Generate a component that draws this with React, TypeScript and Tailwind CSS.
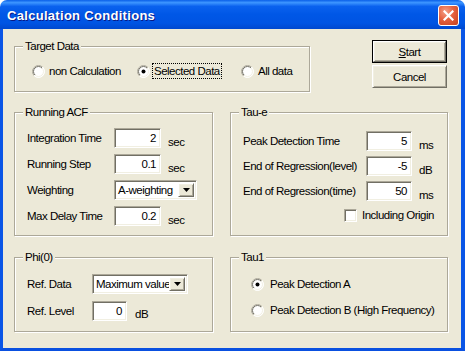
import React from "react";

const SUNKEN =
  "bg-white border border-t-[#aca899] border-l-[#aca899] border-r-white border-b-white shadow-[inset_1px_1px_0_#716f64,inset_-1px_-1px_0_#f1efe2]";
const RAISED =
  "bg-[#ece9d8] border border-t-white border-l-white border-r-[#716f64] border-b-[#716f64] shadow-[inset_1px_1px_0_#f1efe2,inset_-1px_-1px_0_#aca899]";

function Group({
  label,
  className,
  children,
}: {
  label: string;
  className: string;
  children?: React.ReactNode;
}) {
  return (
    <div
      className={`relative border border-[#aca899] shadow-[inset_1px_1px_0_#fff,1px_1px_0_#fff] ${className}`}
    >
      <span className="absolute left-[8px] top-[-8px] bg-[#ece9d8] px-[2px] leading-[14px]">
        {label}
      </span>
      {children}
    </div>
  );
}

function RadioDot({ checked }: { checked?: boolean }) {
  return (
    <svg width="13" height="13" viewBox="0 0 13 13" className="shrink-0">
      <defs>
        <linearGradient id="rgo" x1="0" y1="0" x2="1" y2="1">
          <stop offset="0" stopColor="#aca899" />
          <stop offset="0.5" stopColor="#aca899" />
          <stop offset="0.5" stopColor="#ffffff" />
          <stop offset="1" stopColor="#ffffff" />
        </linearGradient>
        <linearGradient id="rgi" x1="0" y1="0" x2="1" y2="1">
          <stop offset="0" stopColor="#716f64" />
          <stop offset="0.5" stopColor="#716f64" />
          <stop offset="0.5" stopColor="#f1efe2" />
          <stop offset="1" stopColor="#f1efe2" />
        </linearGradient>
      </defs>
      <circle cx="6.5" cy="6.5" r="6" fill="#fff" stroke="url(#rgo)" strokeWidth="1" />
      <circle cx="6.5" cy="6.5" r="5" fill="#fff" stroke="url(#rgi)" strokeWidth="1" />
      {checked && <circle cx="6.5" cy="6.5" r="2" fill="#000" />}
    </svg>
  );
}

function Radio({
  label,
  checked,
  focus,
  className = "",
  gap = "ml-[2px]",
}: {
  label: string;
  checked?: boolean;
  focus?: boolean;
  className?: string;
  gap?: string;
}) {
  return (
    <div className={`flex items-center h-[16px] ${className}`}>
      <RadioDot checked={checked} />
      <span
        className={`${gap} px-[1px] leading-[14px] border border-dotted ${
          focus ? "border-black" : "border-transparent"
        } whitespace-nowrap`}
      >
        {label}
      </span>
    </div>
  );
}

function Field({ value, className }: { value: string; className: string }) {
  return (
    <div
      className={`${SUNKEN} h-[20px] flex items-center justify-end pr-[4px] leading-[18px] ${className}`}
    >
      {value}
    </div>
  );
}

function Select({ value, className }: { value: string; className: string }) {
  return (
    <div className={`${SUNKEN} h-[20px] flex p-[2px] ${className}`}>
      <span className="flex-1 leading-[15px] pl-[1px] whitespace-nowrap overflow-hidden">
        {value}
      </span>
      <div className={`${RAISED} w-[16px] h-full flex items-center justify-center`}>
        <svg width="7" height="4" viewBox="0 0 7 4">
          <path d="M0 0h7L3.5 4z" fill="#000" />
        </svg>
      </div>
    </div>
  );
}

function Unit({ children }: { children: React.ReactNode }) {
  return <span className="ml-[7px] pt-[7px] leading-[14px]">{children}</span>;
}

export default function App() {
  return (
    <div className="w-[465px] h-[351px] bg-white font-['Liberation_Sans',Arial,sans-serif] text-[11.5px] tracking-[-0.5px] text-black">
      <div className="w-[465px] h-[351px] flex flex-col">
        {/* Title bar */}
        <div className="h-[29px] shrink-0 flex items-start rounded-t-[7px] pl-[7px] pr-[6px] bg-[linear-gradient(180deg,#0a5fe8_0%,#3d95ff_9%,#0a61ee_22%,#0057e6_50%,#0054e3_80%,#0048cf_100%)]">
          <span className="mt-[8px] leading-[16px] text-white font-bold text-[13px] tracking-[0.3px] [text-shadow:1px_1px_0_#0a1883]">
            Calculation Conditions
          </span>
          <div className="ml-auto mt-[5px] w-[21px] h-[21px] rounded-[3px] border border-white flex items-center justify-center bg-[radial-gradient(circle_at_35%_30%,#f4a088_0%,#e5613f_45%,#c8401c_100%)]">
            <svg width="11" height="11" viewBox="0 0 11 11">
              <path d="M1.5 1.5L9.5 9.5M9.5 1.5L1.5 9.5" stroke="#fff" strokeWidth="2.2" strokeLinecap="square" />
            </svg>
          </div>
        </div>

        {/* Client area */}
        <div className="flex-1 bg-[#ece9d8] border-l-[3px] border-r-[4px] border-b-[3px] border-l-[#0a55e6] border-r-[#0a55e6] border-b-[#0a50e0] pl-[11px] pt-[11px]">
          {/* Row 1 */}
          <div className="flex">
            <Group label="Target Data" className="mt-[6px] w-[296px] h-[46px]">
              <div className="flex pt-[16px] pl-[17px]">
                <Radio label="non Calculation" className="w-[105px]" />
                <Radio label="Selected Data" checked focus className="w-[104px]" />
                <Radio label="All data" />
              </div>
            </Group>
            <div className="ml-[62px] flex flex-col gap-[2px]">
              <button className="w-[75px] h-[23px] border border-black p-0 bg-[#ece9d8]">
                <div className={`${RAISED} h-full flex items-center justify-center leading-[14px]`}>
                  <span>
                    <span className="underline underline-offset-[1px]">S</span>tart
                  </span>
                </div>
              </button>
              <button className={`${RAISED} w-[75px] h-[23px] flex items-center justify-center leading-[14px]`}>
                Cancel
              </button>
            </div>
          </div>

          {/* Rows 2 and 3 */}
          <div className="mt-[20px] grid grid-cols-[199px_218px] grid-rows-[124px_75px] gap-x-[17px] gap-y-[21px]">
            <Group label="Running ACF" className="">
              <div className="flex flex-col gap-[6px] pt-[15px] pl-[12px]">
                <div className="flex items-center h-[20px]">
                  <span className="w-[87px] leading-[14px] whitespace-nowrap">Integration Time</span>
                  <Field value="2" className="w-[47px]" />
                  <Unit>sec</Unit>
                </div>
                <div className="flex items-center h-[20px]">
                  <span className="w-[87px] leading-[14px] whitespace-nowrap">Running Step</span>
                  <Field value="0.1" className="w-[47px]" />
                  <Unit>sec</Unit>
                </div>
                <div className="flex items-center h-[20px]">
                  <span className="w-[87px] leading-[14px] whitespace-nowrap">Weighting</span>
                  <Select value="A-weighting" className="w-[83px]" />
                </div>
                <div className="flex items-center h-[20px]">
                  <span className="w-[87px] leading-[14px] whitespace-nowrap">Max Delay Time</span>
                  <Field value="0.2" className="w-[47px]" />
                  <Unit>sec</Unit>
                </div>
              </div>
            </Group>

            <Group label="Tau-e" className="">
              <div className="flex flex-col gap-[5px] pt-[18px] pl-[12px]">
                <div className="flex items-center h-[20px]">
                  <span className="w-[123px] leading-[14px] whitespace-nowrap">Peak Detection Time</span>
                  <Field value="5" className="w-[46px]" />
                  <Unit>ms</Unit>
                </div>
                <div className="flex items-center h-[20px]">
                  <span className="w-[123px] leading-[14px] whitespace-nowrap">End of Regression(level)</span>
                  <Field value="-5" className="w-[46px]" />
                  <Unit>dB</Unit>
                </div>
                <div className="flex items-center h-[20px]">
                  <span className="w-[123px] leading-[14px] whitespace-nowrap">End of Regression(time)</span>
                  <Field value="50" className="w-[46px]" />
                  <Unit>ms</Unit>
                </div>
                <div className="flex items-center h-[14px] mt-[2px] ml-[101px]">
                  <div className={`${SUNKEN} w-[13px] h-[13px] shrink-0`} />
                  <span className="ml-[5px] leading-[14px] whitespace-nowrap">Including Origin</span>
                </div>
              </div>
            </Group>

            <Group label="Phi(0)" className="">
              <div className="flex flex-col gap-[7px] pt-[16px] pl-[12px]">
                <div className="flex items-center h-[20px]">
                  <span className="w-[65px] leading-[14px]">Ref. Data</span>
                  <Select value="Maximum value" className="w-[96px]" />
                </div>
                <div className="flex items-center h-[20px]">
                  <span className="w-[65px] leading-[14px]">Ref. Level</span>
                  <Field value="0" className="w-[35px]" />
                  <span className="ml-[8px] pt-[6px] leading-[14px]">dB</span>
                </div>
              </div>
            </Group>

            <Group label="Tau1" className="">
              <div className="flex flex-col gap-[10px] pt-[18px] pl-[20px]">
                <Radio label="Peak Detection A" checked gap="ml-[4px]" />
                <Radio label="Peak Detection B (High Frequency)" gap="ml-[4px]" />
              </div>
            </Group>
          </div>
        </div>
      </div>
    </div>
  );
}
